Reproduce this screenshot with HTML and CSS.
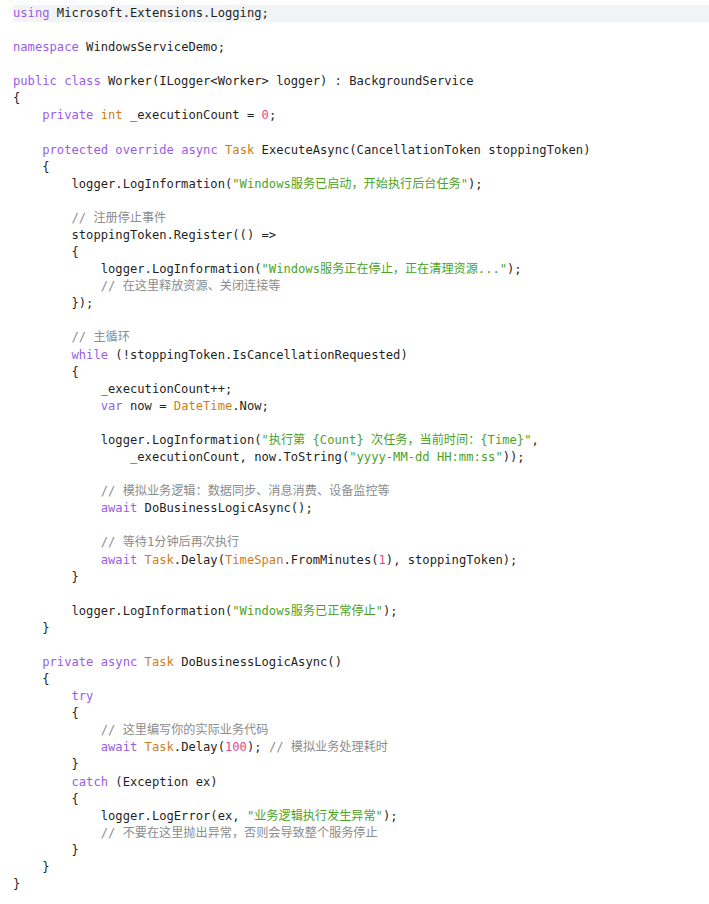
FILE: index.html
```html
<!DOCTYPE html>
<html lang="zh-CN">
<head>
<meta charset="utf-8">
<title>Worker.cs</title>
<link rel="stylesheet" href="styles.css">
</head>
<body>
<div class="code">
<div class="ln cur"><span class="k">using</span> Microsoft.Extensions.Logging;</div>
<div class="ln"> </div>
<div class="ln"><span class="k">namespace</span> WindowsServiceDemo;</div>
<div class="ln"> </div>
<div class="ln"><span class="k">public</span> <span class="k">class</span> Worker(ILogger&lt;Worker&gt; logger) : BackgroundService</div>
<div class="ln">{</div>
<div class="ln">    <span class="k">private</span> <span class="t">int</span> _executionCount = <span class="n">0</span>;</div>
<div class="ln"> </div>
<div class="ln">    <span class="k">protected</span> <span class="k">override</span> <span class="k">async</span> <span class="t">Task</span> ExecuteAsync(CancellationToken stoppingToken)</div>
<div class="ln">    {</div>
<div class="ln">        logger.LogInformation(<span class="s">"Windows服务已启动，开始执行后台任务"</span>);</div>
<div class="ln"> </div>
<div class="ln">        <span class="c">// 注册停止事件</span></div>
<div class="ln">        stoppingToken.Register(() =&gt;</div>
<div class="ln">        {</div>
<div class="ln">            logger.LogInformation(<span class="s">"Windows服务正在停止，正在清理资源..."</span>);</div>
<div class="ln">            <span class="c">// 在这里释放资源、关闭连接等</span></div>
<div class="ln">        });</div>
<div class="ln"> </div>
<div class="ln">        <span class="c">// 主循环</span></div>
<div class="ln">        <span class="k">while</span> (!stoppingToken.IsCancellationRequested)</div>
<div class="ln">        {</div>
<div class="ln">            _executionCount++;</div>
<div class="ln">            <span class="k">var</span> now = <span class="t">DateTime</span>.Now;</div>
<div class="ln"> </div>
<div class="ln">            logger.LogInformation(<span class="s">"执行第 {Count} 次任务，当前时间：{Time}"</span>,</div>
<div class="ln">                _executionCount, now.ToString(<span class="s">"yyyy-MM-dd HH:mm:ss"</span>));</div>
<div class="ln"> </div>
<div class="ln">            <span class="c">// 模拟业务逻辑：数据同步、消息消费、设备监控等</span></div>
<div class="ln">            <span class="k">await</span> DoBusinessLogicAsync();</div>
<div class="ln"> </div>
<div class="ln">            <span class="c">// 等待1分钟后再次执行</span></div>
<div class="ln">            <span class="k">await</span> <span class="t">Task</span>.Delay(<span class="t">TimeSpan</span>.FromMinutes(<span class="n">1</span>), stoppingToken);</div>
<div class="ln">        }</div>
<div class="ln"> </div>
<div class="ln">        logger.LogInformation(<span class="s">"Windows服务已正常停止"</span>);</div>
<div class="ln">    }</div>
<div class="ln"> </div>
<div class="ln">    <span class="k">private</span> <span class="k">async</span> <span class="t">Task</span> DoBusinessLogicAsync()</div>
<div class="ln">    {</div>
<div class="ln">        <span class="k">try</span></div>
<div class="ln">        {</div>
<div class="ln">            <span class="c">// 这里编写你的实际业务代码</span></div>
<div class="ln">            <span class="k">await</span> <span class="t">Task</span>.Delay(<span class="n">100</span>); <span class="c">// 模拟业务处理耗时</span></div>
<div class="ln">        }</div>
<div class="ln">        <span class="k">catch</span> (Exception ex)</div>
<div class="ln">        {</div>
<div class="ln">            logger.LogError(ex, <span class="s">"业务逻辑执行发生异常"</span>);</div>
<div class="ln">            <span class="c">// 不要在这里抛出异常，否则会导致整个服务停止</span></div>
<div class="ln">        }</div>
<div class="ln">    }</div>
<div class="ln">}</div>
</div>
</body>
</html>
```

FILE: styles.css
```css
html, body {
  margin: 0;
  padding: 0;
  background: #ffffff;
}

.code {
  padding: 5px 0 0 13px;
  font-family: "DejaVu Sans Mono", "Noto Sans CJK SC", monospace;
  font-size: 12.15px;
  line-height: 17.08px;
  color: #1f1f1f;
}

.ln {
  white-space: pre;
  height: 17.08px;
}

.cur {
  background: #f2f3f5;
}

.k { color: #9a5ce6; }
.t { color: #cf7d18; }
.s { color: #4ca21f; }
.n { color: #e5478c; }
.c { color: #8c8c8c; }
```
